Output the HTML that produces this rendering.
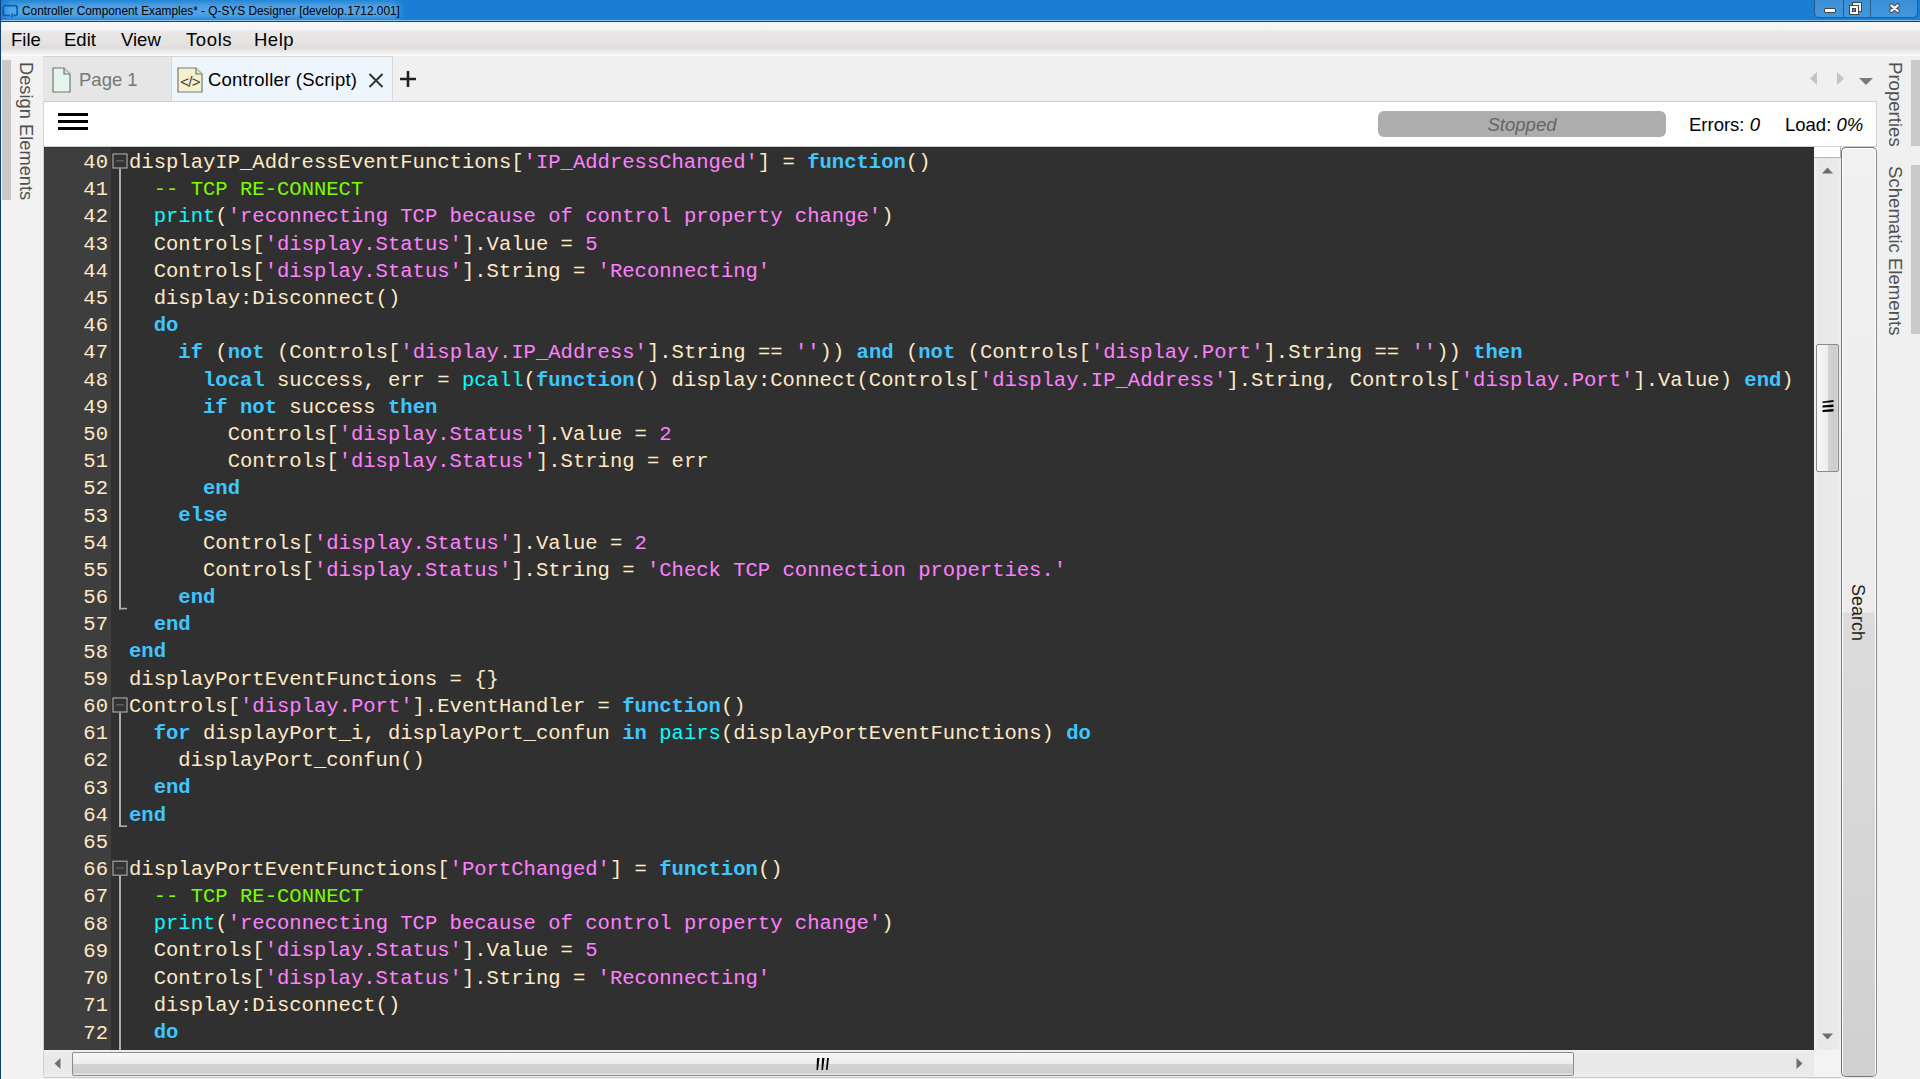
<!DOCTYPE html>
<html><head><meta charset="utf-8">
<style>
*{margin:0;padding:0;box-sizing:border-box}
html,body{width:1920px;height:1079px;overflow:hidden;background:#f0f0f0;font-family:"Liberation Sans",sans-serif}
.a{position:absolute}
#title{left:0;top:0;width:1920px;height:22px;background:#1a7fd4}
#title .line1{left:0;top:20px;width:1920px;height:1px;background:#8cc4f0}
#title .line2{left:0;top:21px;width:1920px;height:1px;background:#1c3a5a}
#ttext{left:22px;top:4px;font-size:11.85px;color:#000;white-space:nowrap;letter-spacing:0}
#lborder{left:0;top:0;width:1px;height:1079px;background:#12407a}
#menu{left:1px;top:22px;width:1919px;height:34px;background:linear-gradient(#fdfdfd 0,#f5f5f5 1px,#f5f5f5 7px,#e9e7e7 10px,#e2e1e0 24px,#dcdbda 26px,#f0f0f0 31px,#fbfbfb 34px)}
.mi{top:7px;font-size:18.5px;color:#000;white-space:nowrap}
#lside{left:1px;top:56px;width:43px;height:1023px;background:#f2f2f2}
.vstrip{background:#c9c9c9}
.vtext{transform-origin:0 0;transform:rotate(90deg);white-space:nowrap;color:#505050;font-size:18.6px}
#tabs{left:43px;top:56px;width:1834px;height:45px;background:#f0f0f0}
#tab1{left:43px;top:56px;width:128px;height:45px;background:#e6e6e6;border-top:1px solid #d4d4d4}
#tab2{left:171px;top:56px;width:222px;height:45px;background:#eef5fc;border-top:1px solid #d4d4d4;border-left:1px solid #d8d8d8;border-right:1px solid #d8d8d8}
#toolbar{left:44px;top:101px;width:1833px;height:45px;background:#fff;border-top:1px solid #cfcfcf}
#editor{left:44px;top:146px;width:1770px;height:904px;background:#303030;overflow:hidden;border-top:1px solid #d0d0d0}
#gutter{left:0;top:0;width:67px;height:904px;background:#3e3e3e}
#nums{left:0;top:2px;width:64px;text-align:right;color:#ffe9c6;font-family:"Liberation Mono",monospace;font-size:20.55px;line-height:27.2px}
#code{left:85px;top:2px;color:#ffe9c6;font-family:"Liberation Mono",monospace;font-size:20.55px;line-height:27.2px;white-space:pre}
#code i{font-style:normal}
#code .s{color:#ff80ff}
#code .c{color:#7dfc00}
#code .f{color:#00ffff}
#code .k{color:#3ec6ff;font-weight:bold}
.ln{height:27.2px}
#vscroll{left:1814px;top:147px;width:27px;height:903px;background:linear-gradient(90deg,#f2f2f2,#e9e9e9 4px,#e9e9e9 23px,#f0f0f0)}
#hscroll{left:44px;top:1050px;width:1770px;height:27px;background:linear-gradient(#f0f0f0,#e9e9e9 4px,#e9e9e9 23px,#eeeeee)}
#corner{left:1814px;top:1050px;width:27px;height:27px;background:#f3f3f3}
#search{left:1841px;top:147px;width:36px;height:930px;border:1.5px solid #747474;border-right-color:#8a8a8a;border-radius:5px;box-shadow:inset 1px 1px 0 #fff,inset -1px 0 0 #fff;background:linear-gradient(#f1f1f1 0,#ececec 464px,#dcdcdc 465px,#d0d0d0 100%)}
#rside{left:1877px;top:56px;width:43px;height:1023px;background:#f0f0f0}
</style></head><body>
<div id="title" class="a">
  <div class="a line1"></div><div class="a line2"></div>
  <div class="a" style="left:4px;top:3px;width:396px;height:15px;background:rgba(160,210,250,0.45);filter:blur(3px);border-radius:6px"></div>
  <svg class="a" style="left:1px;top:4px" width="18" height="15" viewBox="0 0 18 15"><path d="M9 11.5 H4.5 Q2.2 11.5 2.2 9 V4 Q2.2 1.7 4.5 1.7 H14 Q16.2 1.7 16.2 4 V9 Q16.2 11.5 14 11.5 H12.5" fill="none" stroke="#0062b4" stroke-width="1.7"/><path d="M11.2 9.5 V13.5" stroke="#0062b4" stroke-width="1.6"/></svg>
  <div id="ttext" class="a">Controller Component Examples* - Q-SYS Designer [develop.1712.001]</div>
  <!-- window buttons -->
  <div class="a" style="left:1814px;top:0;width:104px;height:18px;border:1px solid #2a5a8a;border-top:none;border-radius:0 0 5px 5px;background:linear-gradient(#3a8fd8,#4397dc)"></div>
  <div class="a" style="left:1843px;top:0;width:1px;height:17px;background:#2a5a8a"></div>
  <div class="a" style="left:1870px;top:0;width:1px;height:17px;background:#2a5a8a"></div>
  <div class="a" style="left:1824px;top:8px;width:12px;height:5px;background:#fff;border:1px solid #444;border-radius:1px"></div>
  <svg class="a" style="left:1849px;top:2px" width="14" height="13" viewBox="0 0 14 13"><rect x="3.5" y="0.5" width="9" height="9" fill="#eee" stroke="#444"/><rect x="0.5" y="3.5" width="9" height="9" fill="#fff" stroke="#444"/><rect x="3.5" y="6.5" width="3" height="3" fill="#3a8fd8" stroke="#444"/></svg>
  <svg class="a" style="left:1888px;top:2px" width="13" height="12" viewBox="0 0 13 12"><path d="M3.3 3.4 L9.7 8.8 M9.7 3.4 L3.3 8.8" stroke="#4a4a55" stroke-width="4.4" stroke-linecap="round"/><path d="M3.3 3.4 L9.7 8.8 M9.7 3.4 L3.3 8.8" stroke="#f4f4f4" stroke-width="2.4" stroke-linecap="round"/></svg>
</div>
<div id="lborder" class="a"></div>
<div id="menu" class="a">
  <div class="a mi" style="left:10px">File</div>
  <div class="a mi" style="left:63px">Edit</div>
  <div class="a mi" style="left:120px">View</div>
  <div class="a mi" style="left:185px;letter-spacing:0.6px">Tools</div>
  <div class="a mi" style="left:253px;letter-spacing:0.5px">Help</div>
</div>
<div id="lside" class="a">
  <div class="a vstrip" style="left:1px;top:4px;width:9px;height:140px"></div>
  <div class="a vtext" style="left:36px;top:6px;font-size:18.3px">Design Elements</div>
</div>
<div id="tabs" class="a"></div>
<div id="tab1" class="a">
  <svg class="a" style="left:9px;top:10px" width="19" height="26" viewBox="0 0 19 26"><path d="M1 1 H12 L18 7 V25 H1 Z" fill="#e4f5ec" stroke="#777" stroke-width="1.2"/><path d="M12 1 V7 H18" fill="#cde5d8" stroke="#777" stroke-width="1.2"/></svg>
  <div class="a" style="left:36px;top:12px;font-size:18.5px;color:#777;white-space:nowrap">Page 1</div>
</div>
<div id="tab2" class="a">
  <svg class="a" style="left:5px;top:10px" width="26" height="26" viewBox="0 0 26 26"><path d="M1 1 H19 L25 7 V25 H1 Z" fill="#f4f1cf" stroke="#777" stroke-width="1.2"/><path d="M19 1 V7 H25" fill="#e6e2b8" stroke="#777" stroke-width="1.2"/><text x="13" y="19.5" font-size="15" text-anchor="middle" fill="#3a3a3a" font-family="Liberation Sans" letter-spacing="-0.8">&lt;/&gt;</text></svg>
  <div class="a" style="left:36px;top:12px;font-size:18.5px;color:#000;white-space:nowrap;letter-spacing:0.22px">Controller (Script)</div>
  <svg class="a" style="left:196px;top:16px" width="16" height="15" viewBox="0 0 16 15"><path d="M1.5 1 L14.5 14 M14.5 1 L1.5 14" stroke="#333" stroke-width="2"/></svg>
</div>
<svg class="a" style="left:399px;top:70px" width="18" height="18" viewBox="0 0 18 18"><path d="M9 1 V17 M1 9 H17" stroke="#222" stroke-width="2.6"/></svg>
<!-- tab nav arrows -->
<svg class="a" style="left:1810px;top:72px" width="8" height="13" viewBox="0 0 8 13"><path d="M7 0 V13 L0 6.5 Z" fill="#c4c4c4"/></svg>
<svg class="a" style="left:1836px;top:72px" width="8" height="13" viewBox="0 0 8 13"><path d="M1 0 V13 L8 6.5 Z" fill="#c4c4c4"/></svg>
<svg class="a" style="left:1859px;top:78px" width="14" height="8" viewBox="0 0 14 8"><path d="M0 0 H14 L7 7 Z" fill="#7a7a7a"/></svg>
<div id="toolbar" class="a">
  <div class="a" style="left:14px;top:11px;width:30px;height:3px;background:#000"></div>
  <div class="a" style="left:14px;top:18px;width:30px;height:3px;background:#000"></div>
  <div class="a" style="left:14px;top:25px;width:30px;height:3px;background:#000"></div>
  <div class="a" style="left:1334px;top:9px;width:288px;height:26px;background:#adadad;border-radius:6px"></div>
  <div class="a" style="left:1334px;top:12px;width:288px;text-align:center;font-size:18.5px;font-style:italic;color:#666">Stopped</div>
  <div class="a" style="left:1645px;top:12px;font-size:18.5px;color:#000;white-space:nowrap">Errors: <i>0</i></div>
  <div class="a" style="left:1741px;top:12px;font-size:18.5px;color:#000;white-space:nowrap">Load: <i>0%</i></div>
</div>
<div id="editor" class="a">
  <div id="gutter" class="a"></div>
  <div class="a" style="left:0;top:0;width:1770px;height:1px;background:rgba(0,0,0,0.18)"></div>
  <svg class="a" style="left:0;top:0" width="120" height="904"><rect x="69" y="7.0" width="14" height="14" fill="#333" stroke="#a9a9a9" stroke-width="1.15"/><rect x="72" y="13.0" width="8" height="1.6" fill="#5a5a5a"/><rect x="75" y="21.5" width="2" height="440.9" fill="#adadad"/><rect x="75" y="460.8" width="8" height="1.6" fill="#adadad"/><rect x="69" y="551.0" width="14" height="14" fill="#333" stroke="#a9a9a9" stroke-width="1.15"/><rect x="72" y="557.0" width="8" height="1.6" fill="#5a5a5a"/><rect x="75" y="565.5" width="2" height="114.5" fill="#adadad"/><rect x="75" y="678.4" width="8" height="1.6" fill="#adadad"/><rect x="69" y="714.2" width="14" height="14" fill="#333" stroke="#a9a9a9" stroke-width="1.15"/><rect x="72" y="720.2" width="8" height="1.6" fill="#5a5a5a"/><rect x="75" y="728.7" width="2" height="175.3" fill="#adadad"/></svg>
  <div id="nums" class="a">40<br>41<br>42<br>43<br>44<br>45<br>46<br>47<br>48<br>49<br>50<br>51<br>52<br>53<br>54<br>55<br>56<br>57<br>58<br>59<br>60<br>61<br>62<br>63<br>64<br>65<br>66<br>67<br>68<br>69<br>70<br>71<br>72</div>
  <div id="code" class="a"><div class="ln">displayIP_AddressEventFunctions[<i class="s">&#x27;IP_AddressChanged&#x27;</i>] = <b class="k">function</b>()</div><div class="ln">  <i class="c">-- TCP RE-CONNECT</i></div><div class="ln">  <i class="f">print</i>(<i class="s">&#x27;reconnecting TCP because of control property change&#x27;</i>)</div><div class="ln">  Controls[<i class="s">&#x27;display.Status&#x27;</i>].Value = <i class="s">5</i></div><div class="ln">  Controls[<i class="s">&#x27;display.Status&#x27;</i>].String = <i class="s">&#x27;Reconnecting&#x27;</i></div><div class="ln">  display:Disconnect()</div><div class="ln">  <b class="k">do</b></div><div class="ln">    <b class="k">if</b> (<b class="k">not</b> (Controls[<i class="s">&#x27;display.IP_Address&#x27;</i>].String == <i class="s">&#x27;&#x27;</i>)) <b class="k">and</b> (<b class="k">not</b> (Controls[<i class="s">&#x27;display.Port&#x27;</i>].String == <i class="s">&#x27;&#x27;</i>)) <b class="k">then</b></div><div class="ln">      <b class="k">local</b> success, err = <i class="f">pcall</i>(<b class="k">function</b>() display:Connect(Controls[<i class="s">&#x27;display.IP_Address&#x27;</i>].String, Controls[<i class="s">&#x27;display.Port&#x27;</i>].Value) <b class="k">end</b>)</div><div class="ln">      <b class="k">if</b> <b class="k">not</b> success <b class="k">then</b></div><div class="ln">        Controls[<i class="s">&#x27;display.Status&#x27;</i>].Value = <i class="s">2</i></div><div class="ln">        Controls[<i class="s">&#x27;display.Status&#x27;</i>].String = err</div><div class="ln">      <b class="k">end</b></div><div class="ln">    <b class="k">else</b></div><div class="ln">      Controls[<i class="s">&#x27;display.Status&#x27;</i>].Value = <i class="s">2</i></div><div class="ln">      Controls[<i class="s">&#x27;display.Status&#x27;</i>].String = <i class="s">&#x27;Check TCP connection properties.&#x27;</i></div><div class="ln">    <b class="k">end</b></div><div class="ln">  <b class="k">end</b></div><div class="ln"><b class="k">end</b></div><div class="ln">displayPortEventFunctions = {}</div><div class="ln">Controls[<i class="s">&#x27;display.Port&#x27;</i>].EventHandler = <b class="k">function</b>()</div><div class="ln">  <b class="k">for</b> displayPort_i, displayPort_confun <b class="k">in</b> <i class="f">pairs</i>(displayPortEventFunctions) <b class="k">do</b></div><div class="ln">    displayPort_confun()</div><div class="ln">  <b class="k">end</b></div><div class="ln"><b class="k">end</b></div><div class="ln">&nbsp;</div><div class="ln">displayPortEventFunctions[<i class="s">&#x27;PortChanged&#x27;</i>] = <b class="k">function</b>()</div><div class="ln">  <i class="c">-- TCP RE-CONNECT</i></div><div class="ln">  <i class="f">print</i>(<i class="s">&#x27;reconnecting TCP because of control property change&#x27;</i>)</div><div class="ln">  Controls[<i class="s">&#x27;display.Status&#x27;</i>].Value = <i class="s">5</i></div><div class="ln">  Controls[<i class="s">&#x27;display.Status&#x27;</i>].String = <i class="s">&#x27;Reconnecting&#x27;</i></div><div class="ln">  display:Disconnect()</div><div class="ln">  <b class="k">do</b></div></div>
</div>
<div id="vscroll" class="a">
  <div class="a" style="left:0;top:0;width:27px;height:11px;background:#fff;border-bottom:1.5px solid #b4b4b4;border-right:1.5px solid #b4b4b4"></div>
  <svg class="a" style="left:8px;top:20px" width="11" height="7" viewBox="0 0 11 7"><path d="M0 6.5 L5.5 0.5 L11 6.5 Z" fill="#6e6e6e"/></svg>
  <div class="a" style="left:2px;top:197px;width:23px;height:128px;border:1px solid #8c8c8c;border-radius:2px;background:linear-gradient(90deg,#f7f7f7 0,#ededed 11px,#d3d3d3 11px,#cdcdcd 20px,#e6e6e6 21px)"></div>
  <svg class="a" style="left:8px;top:253px" width="12" height="13" viewBox="0 0 12 13"><path d="M0.5 1.5 L11.5 0 L11.5 2 L0.5 3 Z M0.5 5.5 L11.5 4.5 L11.5 7 L0.5 7.5 Z M0.5 10 L11.5 9 L11.5 11.5 L0.5 12 Z" fill="#000"/></svg>
  <svg class="a" style="left:8px;top:886px" width="11" height="7" viewBox="0 0 11 7"><path d="M0 0.5 L5.5 6.5 L11 0.5 Z" fill="#6e6e6e"/></svg>
</div>
<div id="hscroll" class="a">
  <svg class="a" style="left:10px;top:8px" width="7" height="11" viewBox="0 0 7 11"><path d="M6.5 0 L0.5 5.5 L6.5 11 Z" fill="#6e6e6e"/></svg>
  <div class="a" style="left:28px;top:2px;width:1502px;height:24px;border:1px solid #8c8c8c;border-radius:2px;background:linear-gradient(#f7f7f7 0,#ededed 11px,#d3d3d3 11px,#cdcdcd 20px,#e6e6e6 21px)"></div>
  <svg class="a" style="left:772px;top:8px" width="13" height="12" viewBox="0 0 13 12"><path d="M1 0 H3.5 L2 12 H0.5 Z M6 0 H8.5 L7 12 H5.5 Z M11 0 H13 L11.5 12 H10 Z" fill="#000"/></svg>
  <svg class="a" style="left:1752px;top:8px" width="7" height="11" viewBox="0 0 7 11"><path d="M0.5 0 L6.5 5.5 L0.5 11 Z" fill="#6e6e6e"/></svg>
</div>
<div id="corner" class="a"></div>
<div id="search" class="a">
  <div class="a vtext" style="left:26px;top:436px;color:#222;font-size:18px">Search</div>
</div>
<div class="a" style="left:43px;top:101px;width:1px;height:976px;background:#d2d2d2"></div>
<div class="a" style="left:44px;top:1077px;width:1797px;height:1px;background:#c9c9c9"></div>
<div class="a" style="left:1814px;top:146px;width:63px;height:1px;background:#d0d0d0"></div>
<div class="a" style="left:1876px;top:101px;width:1px;height:46px;background:#d0d0d0"></div>
<div id="rside" class="a">
  <div class="a vstrip" style="left:34px;top:4px;width:9px;height:86px"></div>
  <div class="a vstrip" style="left:34px;top:109px;width:9px;height:169px"></div>
  <div class="a vtext" style="left:29px;top:6px">Properties</div>
  <div class="a vtext" style="left:29px;top:110px">Schematic Elements</div>
</div>
</body></html>
